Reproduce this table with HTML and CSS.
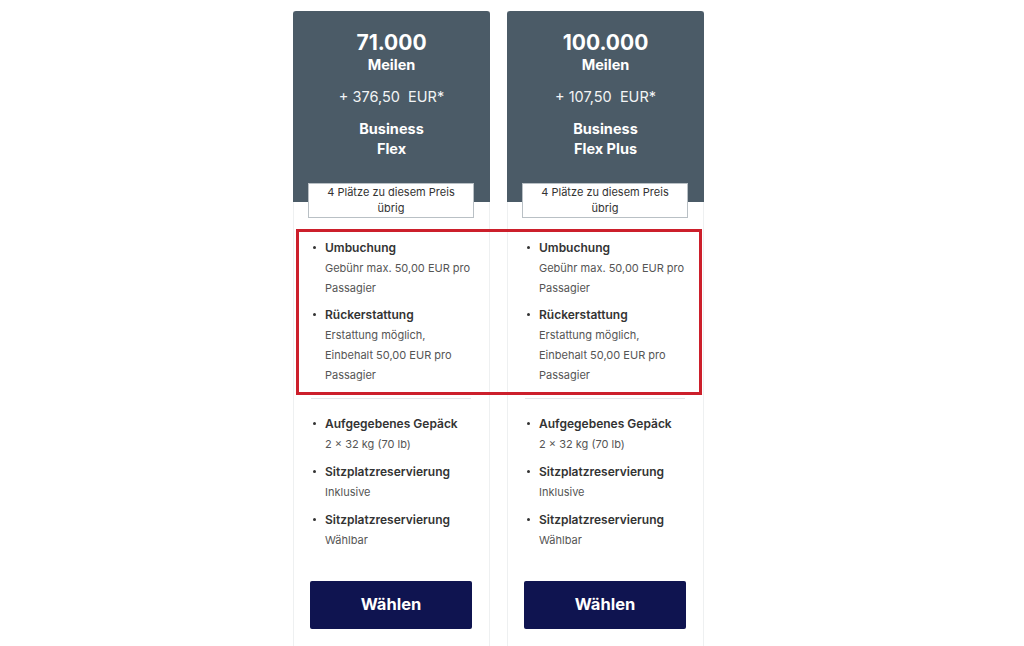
FILE: index.html
```html
<!DOCTYPE html>
<html lang="de">
<head>
<meta charset="utf-8">
<title>Tarife</title>
<link rel="stylesheet" href="styles.css">
</head>
<body>
<div class="page">
  <div class="cards">
    <div class="card">
      <div class="head">
        <div class="miles">71.000</div>
        <div class="unit">Meilen</div>
        <div class="price">+ 376,50&nbsp; EUR*</div>
        <div class="fare">Business<br>Flex</div>
      </div>
      <div class="badge">4 Plätze zu diesem Preis<br>übrig</div>
      <ul class="feats first">
        <li><b>Umbuchung</b><span>Gebühr max. 50,00 EUR pro Passagier</span></li>
        <li><b>Rückerstattung</b><span>Erstattung möglich,<br>Einbehalt 50,00 EUR pro Passagier</span></li>
      </ul>
      <hr class="sep">
      <ul class="feats second">
        <li><b>Aufgegebenes Gepäck</b><span>2 × 32 kg (70 lb)</span></li>
        <li><b>Sitzplatzreservierung</b><span>Inklusive</span></li>
        <li><b>Sitzplatzreservierung</b><span>Wählbar</span></li>
      </ul>
      <button class="choose">Wählen</button>
    </div>
    <div class="card">
      <div class="head">
        <div class="miles">100.000</div>
        <div class="unit">Meilen</div>
        <div class="price">+ 107,50&nbsp; EUR*</div>
        <div class="fare">Business<br>Flex Plus</div>
      </div>
      <div class="badge">4 Plätze zu diesem Preis<br>übrig</div>
      <ul class="feats first">
        <li><b>Umbuchung</b><span>Gebühr max. 50,00 EUR pro Passagier</span></li>
        <li><b>Rückerstattung</b><span>Erstattung möglich,<br>Einbehalt 50,00 EUR pro Passagier</span></li>
      </ul>
      <hr class="sep">
      <ul class="feats second">
        <li><b>Aufgegebenes Gepäck</b><span>2 × 32 kg (70 lb)</span></li>
        <li><b>Sitzplatzreservierung</b><span>Inklusive</span></li>
        <li><b>Sitzplatzreservierung</b><span>Wählbar</span></li>
      </ul>
      <button class="choose">Wählen</button>
    </div>
  </div>
  <div class="highlight"></div>
</div>
</body>
</html>
```
FILE: styles.css
```css
* { box-sizing: border-box; }
html, body { margin: 0; padding: 0; background: #fff; }
body { font-family: Inter, "Noto Sans", "Liberation Sans", sans-serif; width: 1024px; height: 646px; overflow: hidden; }
.page { position: relative; height: 646px; }
.cards { display: flex; gap: 17px; padding: 11px 0 0 293px; }
.card {
  width: 197px;
  height: 660px;
  border: 1px solid #eef0f1;
  border-top: none;
  display: flex;
  flex-direction: column;
  align-items: stretch;
}
.head {
  background: #4b5b67;
  color: #fff;
  text-align: center;
  height: 191px;
  padding-top: 20px;
  border-radius: 3px 3px 0 0;
  margin: 0 -1px;
}
.miles { font-size: 21px; font-weight: 700; line-height: 24px; }
.unit { font-size: 14.5px; font-weight: 700; line-height: 20px; }
.price { font-size: 14.5px; line-height: 20px; margin-top: 12px; color: #f2f4f5; }
.fare { font-size: 14.5px; font-weight: 700; line-height: 20px; margin-top: 12px; }
.badge {
  margin: -19px 15px 0 14px;
  background: #fff;
  border: 1px solid #b9c0c5;
  text-align: center;
  font-size: 11px;
  line-height: 15.5px;
  color: #333;
  padding: 1px 0 0;
  height: 35px;
}
.feats { list-style: none; margin: 0; padding: 0 8px 0 31px; }
.feats li { position: relative; margin-bottom: 7px; }
.feats li:last-child { margin-bottom: 0; }
.feats li::before {
  content: "";
  position: absolute;
  left: -12px;
  top: 8px;
  width: 3px;
  height: 3px;
  background: #333;
  border-radius: 50%;
}
.feats b { display: block; font-size: 12px; font-weight: 600; line-height: 20px; color: #333; }
.feats span { display: block; font-size: 11px; line-height: 20px; color: #555; }
.first { padding-top: 20px; }
.second { padding-top: 15px; }
.second span { line-height: 21px; }
.sep { border: none; border-top: 1px solid #e3e6e8; margin: 13px 18px 0 17px; height: 0; }
.choose {
  margin: 30px 17px 0 16px;
  height: 48px;
  background: #0f1450;
  color: #fff;
  border: none;
  border-radius: 2px;
  font-family: inherit;
  font-size: 16.5px;
  font-weight: 700;
  padding-bottom: 3px;
}
.highlight {
  position: absolute;
  left: 296px;
  top: 229px;
  width: 406px;
  height: 166px;
  border: 3px solid #cc1f2b;
}
```
